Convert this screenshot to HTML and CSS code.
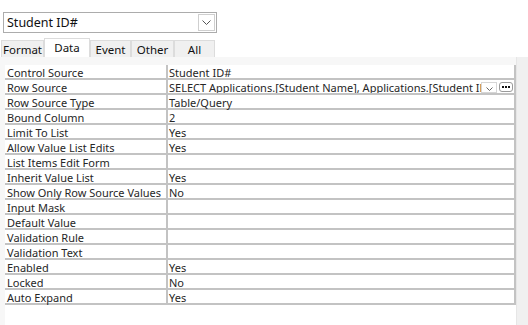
FILE: index.html
```html
<!DOCTYPE html>
<html>
<head>
<meta charset="utf-8">
<link rel="stylesheet" href="styles.css">
</head>
<body>
<div class="top">
  <div class="combo">
    <span class="combo-text">Student ID#</span>
    <span class="combo-btn"><svg width="9" height="5" viewBox="0 0 9 5"><polyline points="0.5,0.5 4.5,4.5 8.5,0.5" fill="none" stroke="#555" stroke-width="1"/></svg></span>
  </div>
  <div class="tabs">
    <div class="tab t-format">Format</div>
    <div class="tab t-data active">Data</div>
    <div class="tab t-event">Event</div>
    <div class="tab t-other">Other</div>
    <div class="tab t-all">All</div>
  </div>
</div>
<div class="panel">
  <div class="list">
    <div class="grid">
      <div class="row"><div class="k">Control Source</div><div class="v">Student ID#</div></div>
      <div class="row"><div class="k">Row Source</div><div class="v v-flex"><span class="clip">SELECT Applications.[Student Name], Applications.[Student ID#] FROM Applications;</span><span class="mini-drop"><svg width="7" height="4" viewBox="0 0 7 4"><polyline points="0.5,0.5 3.5,3.5 6.5,0.5" fill="none" stroke="#666" stroke-width="1"/></svg></span><span class="build"><svg width="8" height="2" viewBox="0 0 8 2"><rect x="0" y="0" width="2" height="2" fill="#111"/><rect x="3" y="0" width="2" height="2" fill="#111"/><rect x="6" y="0" width="2" height="2" fill="#111"/></svg></span></div></div>
      <div class="row"><div class="k">Row Source Type</div><div class="v">Table/Query</div></div>
      <div class="row"><div class="k">Bound Column</div><div class="v">2</div></div>
      <div class="row"><div class="k">Limit To List</div><div class="v">Yes</div></div>
      <div class="row"><div class="k">Allow Value List Edits</div><div class="v">Yes</div></div>
      <div class="row"><div class="k">List Items Edit Form</div><div class="v"></div></div>
      <div class="row"><div class="k">Inherit Value List</div><div class="v">Yes</div></div>
      <div class="row"><div class="k">Show Only Row Source Values</div><div class="v">No</div></div>
      <div class="row"><div class="k">Input Mask</div><div class="v"></div></div>
      <div class="row"><div class="k">Default Value</div><div class="v"></div></div>
      <div class="row"><div class="k">Validation Rule</div><div class="v"></div></div>
      <div class="row"><div class="k">Validation Text</div><div class="v"></div></div>
      <div class="row"><div class="k">Enabled</div><div class="v">Yes</div></div>
      <div class="row"><div class="k">Locked</div><div class="v">No</div></div>
      <div class="row"><div class="k">Auto Expand</div><div class="v">Yes</div></div>
    </div>
  </div>
  <div class="scroll"></div>
</div>
</body>
</html>
```
FILE: styles.css
```css
html, body {
  margin: 0;
  padding: 0;
  background: #ffffff;
  width: 528px;
  height: 325px;
  overflow: hidden;
  font-family: "Noto Sans", "Open Sans", sans-serif;
  color: #262626;
}
.top {
  padding-top: 12px;
}
.combo {
  margin-left: 3px;
  width: 214px;
  height: 21px;
  box-sizing: border-box;
  border: 1px solid #acacac;
  display: flex;
  align-items: center;
  justify-content: space-between;
  padding: 0 1px 0 3px;
  background: #fff;
}
.combo-text {
  font-size: 12.5px;
  color: #111;
}
.combo-btn {
  width: 17px;
  height: 17px;
  box-sizing: border-box;
  border: 1px solid #cfcfcf;
  display: flex;
  align-items: center;
  justify-content: center;
}
.tabs {
  display: flex;
  margin-top: 5px;
  margin-left: 1px;
  height: 19px;
  align-items: flex-end;
}
.tab {
  height: 17px;
  box-sizing: border-box;
  background: #f0f0f0;
  border: 1px solid #dcdcdc;
  border-bottom: none;
  font-size: 11.5px;
  line-height: 15px;
  color: #111;
  display: flex;
  align-items: center;
  justify-content: center;
  padding-top: 1px;
}
.tab.active {
  height: 19px;
  background: #ffffff;
  padding-bottom: 3px;
}
.t-format { width: 43px; }
.t-data { width: 46px; }
.t-event { width: 41px; }
.t-other { width: 43px; }
.t-all { width: 41px; }
.panel {
  display: flex;
  height: 268px;
  background: #f7f7f7;
}
.list {
  margin-left: 5px;
  margin-top: 8px;
  width: 511px;
  background: #ffffff;
}
.scroll {
  flex: 1;
  background: #f0f0f0;
  border-left: 1px solid #e6e6e6;
}
.grid {
  display: flex;
  flex-direction: column;
}
.row {
  display: flex;
  height: 15px;
  box-sizing: border-box;
  border-bottom: 2px solid #c3c3c3;
  border-right: 2px solid #c3c3c3;
  font-size: 11px;
  line-height: 11px;
}
.k {
  width: 159px;
  padding-left: 2px;
  padding-top: 2px;
  border-right: 2px solid #c3c3c3;
  white-space: nowrap;
}
.v {
  flex: 1;
  padding-left: 1px;
  padding-top: 2px;
  white-space: nowrap;
  min-width: 0;
}
.v-flex {
  display: flex;
  align-items: flex-start;
  padding-top: 0;
  overflow: hidden;
}
.clip {
  flex: 1;
  overflow: hidden;
  white-space: nowrap;
  min-width: 0;
  line-height: 11px;
  padding-top: 2px;
}
.mini-drop {
  width: 16px;
  height: 11px;
  box-sizing: border-box;
  border: 1px solid #d6d6d6;
  display: flex;
  align-items: flex-end;
  justify-content: center;
  padding-bottom: 1px;
  margin-top: 2px;
}
.build {
  width: 14px;
  height: 10px;
  box-sizing: border-box;
  border: 1px solid #9a9a9a;
  border-radius: 3px;
  margin-left: 2px;
  margin-right: 1px;
  margin-top: 2px;
  display: flex;
  align-items: center;
  justify-content: center;
}
```
